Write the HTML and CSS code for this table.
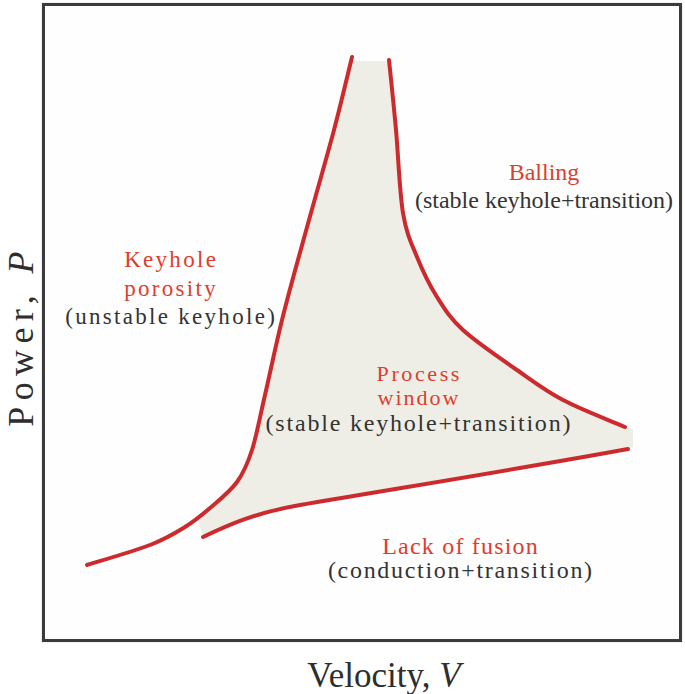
FILE: index.html
```html
<!DOCTYPE html>
<html lang="en">
<head>
<meta charset="utf-8">
<title>Process window diagram</title>
<link rel="stylesheet" href="styles.css">
</head>
<body>
<div class="figure">
  <div class="ylabel"><span>Power, <i>P</i></span></div>
  <div class="plot">
    <svg class="curves" viewBox="45 6 634 633" width="634" height="633" aria-hidden="true">
      <path class="window" d="M203,537 L198,519 L210,508 C218.7,500.5 230,491.7 237,482 C244,472.3 247.3,464.5 252,450 C256.7,435.5 259.8,417.3 265,395 C270.2,372.7 275.7,345.2 283,316 C290.3,286.8 300.5,251 309,220 C317.5,189 326.8,157.2 334,130 C341.2,102.8 349,69.2 352,61 L389,61 C390.2,71.7 393.7,104.5 396,130 C398.3,155.5 399.5,191.8 403,213 C406.5,234.2 411.3,243 417,257 C422.7,271 429.3,284.8 437,297 C444.7,309.2 449.7,317.8 463,330 C476.3,342.2 500.3,358.3 517,370 C533.7,381.7 545,390.5 563,400 C581,409.5 614.7,422.5 625,427 L633,429 L633,447 L628,449 C530,467 400,488 300,505 C255,513 230,524 203,537 Z"/>
      <path class="edge" d="M352,57 C349,69.2 341.2,102.8 334,130 C326.8,157.2 317.5,189 309,220 C300.5,251 290.3,286.8 283,316 C275.7,345.2 270.2,372.7 265,395 C259.8,417.3 256.7,435.5 252,450 C247.3,464.5 244,472.3 237,482 C230,491.7 218.7,500.5 210,508 C201.3,515.5 195,520.8 185,527 C175,533.2 166.3,538.7 150,545 C133.7,551.3 97.5,561.7 87,565"/>
      <path class="edge" d="M389,60 C390.2,71.7 393.7,104.5 396,130 C398.3,155.5 399.5,191.8 403,213 C406.5,234.2 411.3,243 417,257 C422.7,271 429.3,284.8 437,297 C444.7,309.2 449.7,317.8 463,330 C476.3,342.2 500.3,358.3 517,370 C533.7,381.7 545,390.5 563,400 C581,409.5 614.7,422.5 625,427"/>
      <path class="edge" d="M203,537 C230,524 255,513 300,505 C400,488 530,467 628,449"/>
    </svg>

    <div class="region region-balling">
      <div class="name">Balling</div>
      <div class="note">(stable keyhole+transition)</div>
    </div>

    <div class="region region-keyhole">
      <div class="name">Keyhole</div>
      <div class="name">porosity</div>
      <div class="note">(unstable keyhole)</div>
    </div>

    <div class="region region-process">
      <div class="name name-process">Process</div>
      <div class="name name-window">window</div>
      <div class="note">(stable keyhole+transition)</div>
    </div>

    <div class="region region-lack">
      <div class="name">Lack of fusion</div>
      <div class="note">(conduction+transition)</div>
    </div>
  </div>
  <div class="xlabel">Velocity, <i>V</i></div>
</div>
</body>
</html>
```

FILE: styles.css
```css
html, body {
  margin: 0;
  padding: 0;
  background: #ffffff;
}

body {
  width: 685px;
  height: 694px;
  overflow: hidden;
  font-family: "Liberation Serif", "Times New Roman", serif;
  color: #333333;
}

.figure {
  display: grid;
  grid-template-columns: 42px 640px;
  grid-template-rows: 642px 52px;
}

.ylabel {
  grid-column: 1;
  grid-row: 1;
  display: flex;
  align-items: center;
  justify-content: center;
  padding-top: 30px;
  box-sizing: border-box;
  color: #2e2e2e;
}

.ylabel span {
  writing-mode: vertical-rl;
  transform: rotate(180deg);
  font-size: 36px;
  letter-spacing: 6.4px;
  line-height: 36px;
  white-space: nowrap;
}

.plot {
  grid-column: 2;
  grid-row: 1;
  position: relative;
  margin-top: 3px;
  width: 640px;
  height: 639px;
  box-sizing: border-box;
  border: 3px solid #3b3b3b;
  box-shadow: 0 0 1px rgba(0, 0, 0, 0.35);
  background: #fefefe;
}

.curves {
  display: block;
}

.window {
  fill: #efeee6;
  stroke: none;
}

.edge {
  fill: none;
  stroke: #cc2a2d;
  stroke-width: 4;
  stroke-linecap: round;
  stroke-linejoin: round;
}

.region {
  position: absolute;
  transform: translateX(-50%);
  text-align: center;
  white-space: nowrap;
  font-size: 24px;
}

.name {
  color: #de3d2e;
}

.note {
  color: #333333;
}

.region-balling {
  left: 499px;
  top: 152px;
  line-height: 28px;
}

.region-keyhole {
  left: 125px;
  top: 240px;
  font-size: 23px;
  line-height: 28.5px;
  letter-spacing: 2.3px;
  padding-left: 2.3px;
}

.region-process {
  left: 373px;
  top: 356px;
  line-height: 24.4px;
}

.region-process .name {
  font-size: 22px;
}

.region-process .name-process {
  letter-spacing: 2.6px;
  padding-left: 2.6px;
}

.region-process .name-window {
  letter-spacing: 2px;
  padding-left: 2px;
}

.region-process .note {
  letter-spacing: 1.8px;
  padding-left: 1.8px;
}

.region-lack {
  left: 415px;
  top: 528px;
  line-height: 24px;
}

.region-lack .name {
  letter-spacing: 1.2px;
  padding-left: 1.2px;
}

.region-lack .note {
  letter-spacing: 1.7px;
  padding-left: 1.7px;
}

.xlabel {
  grid-column: 2;
  grid-row: 2;
  padding-left: 44px;
  padding-top: 14px;
  text-align: center;
  font-size: 35px;
  line-height: 40px;
  color: #2e2e2e;
  white-space: nowrap;
}
```
